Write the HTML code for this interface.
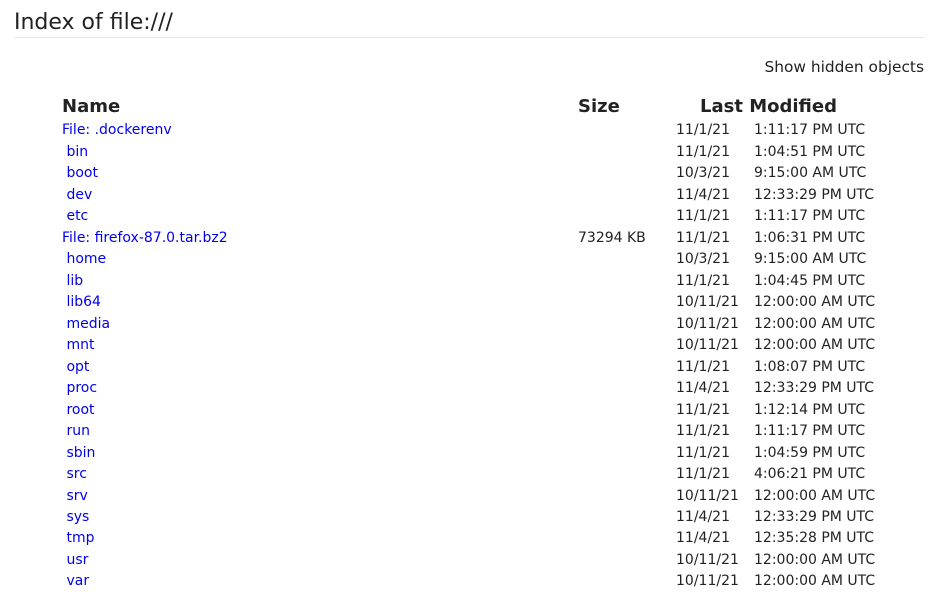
<!DOCTYPE html>
<html><head><meta charset="utf-8"><style>
body{margin:0;width:937px;height:598px;background:#fff;color:#222;font-family:"DejaVu Sans","Liberation Sans",sans-serif;position:relative;overflow:hidden}
h1{position:absolute;left:14px;top:9px;margin:0;font-size:22px;font-weight:normal;line-height:28px;width:910px;border-bottom:1px solid #e6e6e6;height:28px}
.sh{position:absolute;right:13px;top:56px;font-size:15.4px;line-height:22px}
.h{position:absolute;top:95px;font-size:18px;font-weight:bold;line-height:24px}
#rows{position:absolute;left:0;top:2px;width:937px;height:596px}
.r{position:absolute;left:0;width:937px;height:21.48px;line-height:21.48px;font-size:14px}
.r span{position:absolute;white-space:pre}
.n{left:62px;color:#0000ee}
.s{left:578px}
.d{left:676px}
.t{left:754px}
</style></head><body>
<h1>Index of file:///</h1>
<div class="sh">Show hidden objects</div>
<div class="h" style="left:62px">Name</div>
<div class="h" style="left:578px">Size</div>
<div class="h" style="left:700px">Last Modified</div>
<div id="rows">
<div class="r" style="top:118.3px"><span class="n">File: .dockerenv</span><span class="d">11/1/21</span><span class="t">1:11:17 PM UTC</span></div>
<div class="r" style="top:139.8px"><span class="n"> bin</span><span class="d">11/1/21</span><span class="t">1:04:51 PM UTC</span></div>
<div class="r" style="top:161.3px"><span class="n"> boot</span><span class="d">10/3/21</span><span class="t">9:15:00 AM UTC</span></div>
<div class="r" style="top:182.7px"><span class="n"> dev</span><span class="d">11/4/21</span><span class="t">12:33:29 PM UTC</span></div>
<div class="r" style="top:204.2px"><span class="n"> etc</span><span class="d">11/1/21</span><span class="t">1:11:17 PM UTC</span></div>
<div class="r" style="top:225.7px"><span class="n">File: firefox-87.0.tar.bz2</span><span class="s">73294 KB</span><span class="d">11/1/21</span><span class="t">1:06:31 PM UTC</span></div>
<div class="r" style="top:247.2px"><span class="n"> home</span><span class="d">10/3/21</span><span class="t">9:15:00 AM UTC</span></div>
<div class="r" style="top:268.7px"><span class="n"> lib</span><span class="d">11/1/21</span><span class="t">1:04:45 PM UTC</span></div>
<div class="r" style="top:290.1px"><span class="n"> lib64</span><span class="d">10/11/21</span><span class="t">12:00:00 AM UTC</span></div>
<div class="r" style="top:311.6px"><span class="n"> media</span><span class="d">10/11/21</span><span class="t">12:00:00 AM UTC</span></div>
<div class="r" style="top:333.1px"><span class="n"> mnt</span><span class="d">10/11/21</span><span class="t">12:00:00 AM UTC</span></div>
<div class="r" style="top:354.6px"><span class="n"> opt</span><span class="d">11/1/21</span><span class="t">1:08:07 PM UTC</span></div>
<div class="r" style="top:376.1px"><span class="n"> proc</span><span class="d">11/4/21</span><span class="t">12:33:29 PM UTC</span></div>
<div class="r" style="top:397.5px"><span class="n"> root</span><span class="d">11/1/21</span><span class="t">1:12:14 PM UTC</span></div>
<div class="r" style="top:419px"><span class="n"> run</span><span class="d">11/1/21</span><span class="t">1:11:17 PM UTC</span></div>
<div class="r" style="top:440.5px"><span class="n"> sbin</span><span class="d">11/1/21</span><span class="t">1:04:59 PM UTC</span></div>
<div class="r" style="top:462px"><span class="n"> src</span><span class="d">11/1/21</span><span class="t">4:06:21 PM UTC</span></div>
<div class="r" style="top:483.5px"><span class="n"> srv</span><span class="d">10/11/21</span><span class="t">12:00:00 AM UTC</span></div>
<div class="r" style="top:504.9px"><span class="n"> sys</span><span class="d">11/4/21</span><span class="t">12:33:29 PM UTC</span></div>
<div class="r" style="top:526.4px"><span class="n"> tmp</span><span class="d">11/4/21</span><span class="t">12:35:28 PM UTC</span></div>
<div class="r" style="top:547.9px"><span class="n"> usr</span><span class="d">10/11/21</span><span class="t">12:00:00 AM UTC</span></div>
<div class="r" style="top:569.4px"><span class="n"> var</span><span class="d">10/11/21</span><span class="t">12:00:00 AM UTC</span></div>
</div>
</body></html>
